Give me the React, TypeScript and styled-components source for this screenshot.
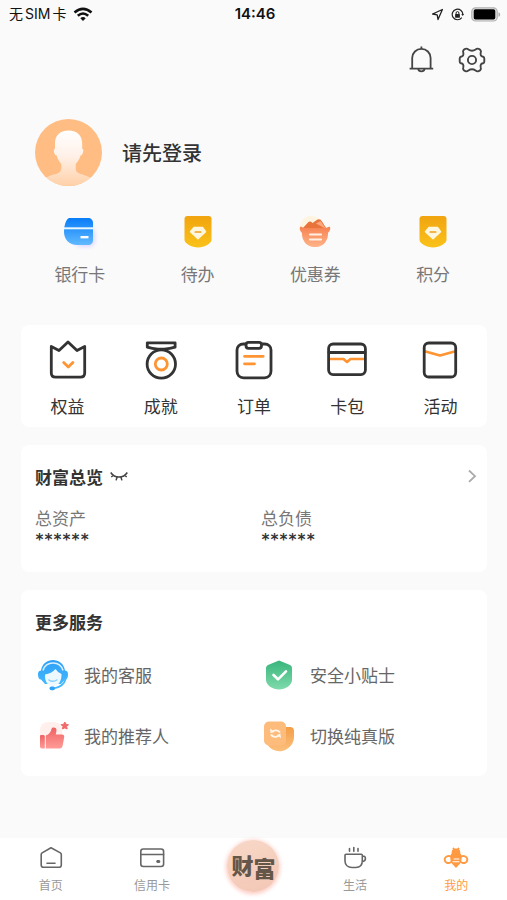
import React from 'react';
import styled, { createGlobalStyle, css } from 'styled-components';

const GlobalStyle = createGlobalStyle`
  *, *::before, *::after { box-sizing: border-box; }
  body {
    margin: 0;
    background: #fafafa;
    color: #333;
    font-family: "Noto Sans CJK SC", "Noto Sans", sans-serif;
  }
  button { font: inherit; color: inherit; background: none; border: 0; padding: 0; cursor: pointer; }
  a { color: inherit; text-decoration: none; }
  svg { display: block; flex: none; }
  h1, h2, p, dl, dd, ul { margin: 0; padding: 0; }
  ul { list-style: none; }
`;

const Screen = styled.div`
  min-height: 100vh;
  display: flex;
  flex-direction: column;
`;

const StatusBar = styled.div`
  display: grid;
  grid-template-columns: 1fr auto 1fr;
  align-items: center;
  height: 28px;
  padding: 0 6px 0 9px;
  color: #111;
  font-family: Inter, "Noto Sans CJK SC", sans-serif;
  font-size: 14px;
  line-height: 20px;
`;

const StatusGroup = styled.div<{ $end?: boolean }>`
  display: flex;
  align-items: center;
  gap: 7px;
  justify-content: ${(p) => (p.$end ? 'flex-end' : 'flex-start')};
`;

const Carrier = styled.span`
  display: flex;
  gap: 2px;
`;

const Time = styled.time`
  font-size: 15px;
  font-weight: 600;
`;

const Toolbar = styled.header`
  display: flex;
  justify-content: flex-end;
  gap: 19px;
  padding: 16px 19px 0;
`;

const Profile = styled.section`
  display: flex;
  align-items: center;
  gap: 20px;
  padding: 43px 35px 0;
`;

const LoginButton = styled.button`
  font-size: 20px;
  line-height: 28px;
  font-weight: 500;
`;

const QuickRow = styled.nav`
  display: grid;
  grid-template-columns: repeat(4, 1fr);
  padding: 28px 15px 0 21px;
  color: #777;
`;

const IconItem = styled.button<{ $gap: number }>`
  display: flex;
  flex-direction: column;
  align-items: center;
  gap: ${(p) => p.$gap}px;
  font-size: 17px;
  line-height: 24px;
`;

const Main = styled.main`
  display: flex;
  flex-direction: column;
  gap: 18px;
  margin-top: 39px;
  padding: 0 20px 0 21px;
`;

const cardSurface = css`
  background: #fff;
  border-radius: 8px;
`;

const FeatureCard = styled.nav`
  ${cardSurface}
  display: grid;
  grid-template-columns: repeat(5, 1fr);
  padding: 13px 0 9px;
`;

const Card = styled.section`
  ${cardSurface}
  padding: 19px 0 22px 14px;
`;

const CardHead = styled.div`
  display: flex;
  align-items: center;
  gap: 7px;
  padding-right: 9px;
`;

const CardTitle = styled.h2`
  font-size: 17px;
  line-height: 26px;
  font-weight: 700;
`;

const MoreButton = styled.button`
  margin-left: auto;
`;

const Totals = styled.dl`
  display: grid;
  grid-template-columns: 1fr 1fr;
  margin-top: 16px;
`;

const TotalLabel = styled.dt`
  font-size: 17px;
  line-height: 24px;
  color: #777;
`;

const TotalValue = styled.dd`
  font-family: "DejaVu Sans Mono", monospace;
  font-size: 15px;
  line-height: 20px;
  font-weight: 700;
`;

const ServiceList = styled.ul`
  display: grid;
  grid-template-columns: 1fr 1fr;
  row-gap: 25px;
  margin-top: 22px;
`;

const ServiceButton = styled.button`
  display: flex;
  align-items: center;
  gap: 13px;
  font-size: 17px;
  line-height: 24px;
  color: #666;
`;

const TabBar = styled.nav`
  display: grid;
  grid-template-columns: repeat(5, 1fr);
  margin-top: auto;
  height: 62px;
  background: #fff;
`;

const Tab = styled.a<{ $active?: boolean }>`
  display: flex;
  flex-direction: column;
  align-items: center;
  gap: 4px;
  padding-top: 6px;
  font-size: 12px;
  line-height: 18px;
  color: ${(p) => (p.$active ? '#ff9a42' : '#999')};
`;

const WealthTab = styled.a`
  display: flex;
  align-items: center;
  justify-content: center;
  width: 52px;
  height: 52px;
  margin-top: 2px;
  justify-self: center;
  border-radius: 50%;
  background: linear-gradient(160deg, #f8d8c8, #f3c6b4);
  box-shadow: 0 1px 4px 1px #ffc9c0;
  color: #65564a;
  font-size: 22px;
  line-height: 24px;
  font-weight: 900;
`;

const WealthChar = styled.span<{ $low?: boolean }>`
  padding-top: ${(p) => (p.$low ? 2 : 0)}px;
  padding-bottom: ${(p) => (p.$low ? 0 : 4)}px;
`;

const WifiIcon = () => (
  <svg width="20" height="15" viewBox="0 0 20 15" fill="none" stroke="#111" strokeWidth="2.6" aria-hidden="true">
    <path d="M1.5 5.5Q10-1.7 18.5 5.5M4.8 8.8Q10 4.2 15.2 8.8" />
    <path d="M7.3 11.2Q10 9 12.7 11.2L10 14Z" fill="#111" stroke="none" />
  </svg>
);

const LocationIcon = () => (
  <svg width="13" height="13" viewBox="0 0 13 13" fill="none" stroke="#222" strokeWidth="1.3" strokeLinejoin="round" aria-hidden="true">
    <path d="M11.4 1.5 1.6 6l4.6.9.8 4.6Z" />
  </svg>
);

const LockIcon = () => (
  <svg width="13" height="13" viewBox="0 0 13 13" fill="none" stroke="#222" aria-hidden="true">
    <path d="M10.8 9.6A5.3 5.3 0 1 1 11.8 7" strokeWidth="1.2" />
    <path d="m10.2 6.3 1.6 1.8 1.2-2Z" fill="#222" stroke="none" />
    <rect x="4.1" y="6" width="4.8" height="3.7" rx=".5" fill="#222" stroke="none" />
    <path d="M5.1 6V5a1.4 1.4 0 0 1 2.8 0v1" />
  </svg>
);

const BatteryIcon = () => (
  <svg width="30" height="15" viewBox="0 0 30 15" aria-hidden="true">
    <rect x=".8" y=".8" width="25.4" height="13.2" rx="3.8" fill="#e5e5e5" stroke="#b0b0b0" strokeWidth="1.2" />
    <rect x="2.7" y="2.2" width="21.6" height="10.4" rx="1.8" fill="#000" />
    <path d="M27.5 5.2c2.2.8 2.2 3.8 0 4.6Z" fill="#aaa" />
  </svg>
);

const BellIcon = () => (
  <svg width="32" height="32" viewBox="0 0 32 32" fill="none" stroke="#444" strokeWidth="1.8" aria-hidden="true">
    <path d="M7.2 24.5V14a9.2 9.2 0 0 1 18.4 0v10.5M4.6 24.6h23.6M16.4 2.6v2" />
    <path d="M13.2 25c.6 3.1 5.8 3.1 6.4 0" />
  </svg>
);

const GearIcon = () => (
  <svg width="32" height="32" viewBox="0 0 32 32" fill="none" stroke="#444" strokeWidth="1.9" strokeLinejoin="round" aria-hidden="true">
    <path d="M9.4 4.8Q11 4.3 12.4 5.5Q16 8 19.6 5.5Q21 4.3 22.6 4.8L24.3 5.9Q25.400 7 24.700 8.800Q24 12.200 27 12.700Q28.300 13.200 28.300 14.600V17.400Q28.300 18.800 27 19.300Q24 19.800 24.700 23.200Q25.400 25 24.300 26.100L22.600 27.200Q21 27.700 19.600 26.500Q16 24 12.400 26.500Q11 27.700 9.400 27.200L7.700 26.100Q6.600 25 7.300 23.200Q8 19.800 5 19.300Q3.700 18.800 3.700 17.400V14.600Q3.700 13.200 5 12.700Q8 12.200 7.300 8.800Q6.600 7 7.700 5.900Z" />
    <circle cx="16" cy="16" r="4.100" />
  </svg>
);

const Avatar = () => (
  <svg width="67" height="67" viewBox="0 0 67 67" role="img" aria-label="头像">
    <defs>
      <linearGradient id="person" x1="0" y1="0" x2="0" y2="1">
        <stop offset="0" stopColor="#fff" />
        <stop offset=".45" stopColor="#fff1e8" />
        <stop offset="1" stopColor="#ffcfa5" />
      </linearGradient>
      <clipPath id="disc"><circle cx="33.5" cy="33.5" r="33.5" /></clipPath>
    </defs>
    <circle cx="33.5" cy="33.5" r="33.5" fill="#ffbd83" />
    <path
      clipPath="url(#disc)"
      fill="url(#person)"
      d="M33.500 11.500c9 0 13.700 5.400 13.700 13v5.300c1.600.5 1.300 3.400.2 5.100-.6 1-1.100 1.600-1.900 1.700-1 4-2.700 6.100-4.800 8.300v4.600c0 4.800 5 5.500 9 6.700 3.800 1.200 6 2.500 9 5.300V68h-51v-6c3-3 5.400-4.800 9.400-6 4.200-1.200 9.200-1.800 9.200-6.500v-4.600c-2.400-2.400-3.800-5-4.600-8.300-.8-.1-1.500-.8-2-1.700-1-1.700-1.300-4.600.3-5.100v-5.300c0-7.600 4.500-13 13.500-13Z"
    />
  </svg>
);

const BankCardIcon = () => (
  <svg width="36" height="36" viewBox="0 0 36 36" aria-hidden="true">
    <defs>
      <linearGradient id="bank" x1="0" y1="0" x2="0" y2="1">
        <stop offset="0" stopColor="#087cf8" /><stop offset="1" stopColor="#61baff" />
      </linearGradient>
      <filter id="bankGlow" x="-50%" y="-50%" width="200%" height="200%"><feGaussianBlur stdDeviation="2" /></filter>
    </defs>
    <rect x="13" y="13" width="20" height="20" rx="7" fill="#dcd8ff" filter="url(#bankGlow)" />
    <path d="M7 4h19c3 0 5 2 5 5v17c0 3-2 5-5 5H15C7 31 2 25 2 18 2 11 4 5.500 7 4Z" fill="url(#bank)" />
    <path d="M2 14.300h29" stroke="#e9f7ff" strokeWidth="2" />
    <path d="M18.500 23.200h8" stroke="#fff" strokeWidth="2.400" />
  </svg>
);

const GemIcon = () => (
  <svg width="36" height="36" viewBox="0 0 36 36" aria-hidden="true">
    <defs>
      <linearGradient id="gem" x1="0" y1="0" x2="0" y2="1">
        <stop offset="0" stopColor="#f1a40f" /><stop offset="1" stopColor="#fac21b" />
      </linearGradient>
    </defs>
    <path d="M7.500 2h21c2 0 3 1 3 3v21c0 3-7 7.500-13.500 7.500S4.500 29 4.500 26V5c0-2 1-3 3-3Z" fill="url(#gem)" />
    <path d="M14 13.500h8.500l3 4.200-7.500 7-7.500-7Z" fill="#fff6df" stroke="#fff6df" strokeWidth="1.500" strokeLinejoin="round" />
    <path d="M15.300 18h5.400" stroke="#eda11a" strokeWidth="1.700" strokeLinecap="round" />
  </svg>
);

const CouponIcon = () => (
  <svg width="36" height="36" viewBox="0 0 36 36" aria-hidden="true">
    <defs>
      <linearGradient id="coupon" x1="0" y1="0" x2="0" y2="1">
        <stop offset="0" stopColor="#f78150" /><stop offset="1" stopColor="#ffb489" />
      </linearGradient>
    </defs>
    <circle cx="14" cy="13" r="11" fill="#fff4df" />
    <path d="M5 15 11 8.500q2-2 4.500.5l5-3.500q3-1 4.500 2l5 8Z" fill="#e8743c" />
    <path d="m19 9.500 4.500-2.500 5.500 8Z" fill="#ffa77c" />
    <path d="M3.500 12.500q3 1.500 6 1.500h17q3 0 6-1.500c1.500 1.500.8 4.500-1.500 6.500 0 3-.5 6-2 8-4 8-18 8-22 0-1.500-2-2-5-2-8-2.300-2-3-5-1.500-6.500Z" fill="url(#coupon)" />
    <path d="M13 20.500h11M13 25.500h11" stroke="#fff0e6" strokeWidth="2.200" strokeLinecap="round" />
  </svg>
);

const lineIcon = { width: 44, height: 44, viewBox: '0 0 44 44', fill: 'none', stroke: '#333', strokeWidth: 2.8, strokeLinejoin: 'round', strokeLinecap: 'round', 'aria-hidden': true } as const;
const ORANGE = '#ff9433';

const CrownIcon = () => (
  <svg {...lineIcon}>
    <path d="M5.300 8.500 13 12.500 22 4l9 8.500 7.700-4V35c0 2.800-1.700 4.200-4.200 4.200h-25c-2.500 0-4.200-1.400-4.200-4.200Z" />
    <path d="m17.700 24.500 4.600 4.600 4.600-4.600" stroke={ORANGE} />
  </svg>
);

const MedalIcon = () => (
  <svg {...lineIcon}>
    <path d="M8.300 4.800h27.800v4.400q-5 1.600-11 1.900h-6q-6-.3-10.800-1.900Z" />
    <circle cx="22.300" cy="26" r="14.200" />
    <circle cx="22.300" cy="26" r="6" stroke={ORANGE} />
  </svg>
);

const OrderIcon = () => (
  <svg {...lineIcon}>
    <path d="M14 6h-2.500C7.500 6 5 8.500 5 12v21c0 4 2.500 6.800 6.500 6.800h21c4 0 6.500-2.800 6.500-6.800V12c0-3.500-2.500-6-6.500-6H30" />
    <rect x="14" y="4.300" width="15.500" height="6" rx="2.500" />
    <path d="M12.500 18.300h18.700M12.500 25.800h10" stroke={ORANGE} />
  </svg>
);

const WalletIcon = () => (
  <svg {...lineIcon}>
    <path d="M4.500 21h14l3.500 3 3.500-3h14" stroke={ORANGE} strokeWidth="2.600" />
    <rect x="3.600" y="6" width="36.800" height="30.600" rx="4.500" />
    <path d="M4 14.500h36" />
  </svg>
);

const EventIcon = () => (
  <svg {...lineIcon}>
    <path d="m7.500 13.500 14.500 4 14.500-4" stroke={ORANGE} strokeWidth="2.600" />
    <rect x="6.200" y="5" width="31.500" height="34" rx="4.500" />
  </svg>
);

const ClosedEyeIcon = () => (
  <svg width="18" height="12" viewBox="0 0 18 12" fill="none" stroke="#444" strokeWidth="1.500" aria-hidden="true">
    <path d="M.7 1.500c4 6 12.600 6 16.600 0M3.300 4.300 1.300 6M7 6.200l-.9 3.200M11 6.200l.9 3.200M14.700 4.300l2 1.700" />
  </svg>
);

const ChevronIcon = () => (
  <svg width="12" height="16" viewBox="0 0 12 16" fill="none" stroke="#aaa" strokeWidth="1.800" aria-hidden="true">
    <path d="m3 1.500 6 5.700-6 5.700" />
  </svg>
);

const SupportIcon = () => (
  <svg width="36" height="36" viewBox="0 0 36 36" aria-hidden="true">
    <defs>
      <linearGradient id="support" x1="0" y1="0" x2="0" y2="1">
        <stop offset="0" stopColor="#2f9ff5" /><stop offset="1" stopColor="#43b8ff" />
      </linearGradient>
    </defs>
    <path d="M6 13.500C8-.5 28-.5 30 13.500c2.500.5 3 1.500 3 4 0 3-1 5-3 5L26 27H10l-4-4.500c-2 0-3-2-3-5 0-2.500.5-3.500 3-4Z" fill="url(#support)" />
    <path d="M8 13.500C11 3.500 25 3.500 28 13.500" fill="none" stroke="#d9f0ff" strokeWidth="1.600" />
    <path d="M10 17.500q6.500-1 10.500-5.500 2.500 4 6 5c.3 7-3 12-8.500 12s-8.500-5-8-11.500Z" fill="#eef9ff" />
    <path d="M14 23q3.800 2.700 7.800 0" fill="none" stroke="#80ccff" strokeWidth="1.500" strokeLinecap="round" />
    <path d="M31 21c-1.500 6-5.500 9.500-12.500 10.500" fill="none" stroke="#48b5ff" strokeWidth="1.700" />
    <rect x="14.500" y="29.500" width="5.500" height="3.800" rx="1.800" fill="#2fa4f7" />
  </svg>
);

const ShieldIcon = () => (
  <svg width="36" height="36" viewBox="0 0 36 36" aria-hidden="true">
    <defs>
      <linearGradient id="shield" x1="0" y1="0" x2="0" y2="1">
        <stop offset="0" stopColor="#38b57b" /><stop offset="1" stopColor="#7fdbab" />
      </linearGradient>
    </defs>
    <path d="M18 3.500 29 8q2 .8 2 3v12c0 5-6.500 9.500-13 9.500S5 28 5 23V11q0-2.200 2-3Z" fill="url(#shield)" />
    <path d="m12.500 18 4.500 4.300 8-8" fill="none" stroke="#fff" strokeWidth="2.600" strokeLinecap="round" strokeLinejoin="round" />
  </svg>
);

const ThumbIcon = () => (
  <svg width="36" height="36" viewBox="0 0 36 36" aria-hidden="true">
    <defs>
      <linearGradient id="thumb" x1="0" y1="0" x2="0" y2="1">
        <stop offset="0" stopColor="#ee6262" /><stop offset="1" stopColor="#ff9c98" />
      </linearGradient>
    </defs>
    <rect x="5" y="4" width="22" height="23" rx="8" fill="#fff0ee" />
    <path d="M6 17h2.500q1.300 0 1.300 1.500v12H7q-2 0-2-2V18q0-1 1-1Z" fill="url(#thumb)" />
    <path d="M10.800 17.500c3.500-1 5.200-4 5.700-6.500.5-2.200 5-2 5 1 0 1.500-.5 3-.7 4.500H27q2.500.2 2.200 2.500l-1.500 8.500q-.6 3-3 3H10.800Z" fill="url(#thumb)" />
    <path d="m29.800 4 1.200 2.300 2.500.4-1.800 1.800.5 2.500-2.400-1.100-2.300 1.100.4-2.500-1.800-1.800 2.500-.4Z" fill="#f06c6c" stroke="#f06c6c" strokeLinejoin="round" />
  </svg>
);

const SwitchIcon = () => (
  <svg width="36" height="36" viewBox="0 0 36 36" aria-hidden="true">
    <defs>
      <linearGradient id="switchBack" x1="0" y1="0" x2="0" y2="1">
        <stop offset="0" stopColor="#f49e45" /><stop offset="1" stopColor="#fbc07e" />
      </linearGradient>
    </defs>
    <path d="M24 9h5q4 0 4 4v5.500a14.500 14.500 0 0 1-28 5.500Z" fill="url(#switchBack)" />
    <rect x="3" y="3.500" width="22" height="24" rx="5" fill="#fdbb7c" />
    <path d="M19 14.500c-1.500-2.500-6-3-7.500-.5M10 16.500c1.500 3 6 3.200 7.800.8" fill="none" stroke="#fff5e8" strokeWidth="1.900" />
    <path d="m9 10.500.5 4.800 4-1.500ZM20 20.300l-.6-4.800-3.900 1.700Z" fill="#fff5e8" />
  </svg>
);

const tabIcon = { width: 28, height: 28, viewBox: '0 0 28 28', fill: 'none', stroke: '#666', strokeWidth: 1.6, strokeLinejoin: 'round', strokeLinecap: 'round', 'aria-hidden': true } as const;

const HomeIcon = () => (
  <svg {...tabIcon}>
    <path d="M4.200 10.500q0-1 .9-1.600L14 3.700l9.400 5.200q.9.600.9 1.600V21q0 2.300-2.300 2.300H6.500q-2.300 0-2.300-2.300ZM10 19.300h8" />
  </svg>
);

const CreditIcon = () => (
  <svg {...tabIcon}>
    <rect x="2.800" y="5" width="22.800" height="17.500" rx="2.500" />
    <path d="M2.800 10.500h22.800" />
    <rect x="18.800" y="16.500" width="3" height="2" rx=".5" fill="#666" strokeWidth="1" />
  </svg>
);

const CupIcon = () => (
  <svg {...tabIcon}>
    <path d="M5 10.300h15.300q1 0 1 1V17c0 4-2.500 6.500-6.500 6.500H11c-4 0-7-2.500-7-6.500v-5.700q0-1 1-1ZM21.500 12c4-.5 4 5.500-.4 5.700M8.500 4.500v2.700M12.800 3.500v3.700M17 4.500v2.700" />
  </svg>
);

const BeeIcon = () => (
  <svg {...tabIcon} stroke="#ff9a42">
    <ellipse cx="6.600" cy="15.500" rx="3.900" ry="3.500" strokeWidth="2" transform="rotate(-15 6.600 15.500)" />
    <ellipse cx="21.400" cy="15.500" rx="3.900" ry="3.500" strokeWidth="2" transform="rotate(15 21.400 15.500)" />
    <path d="m11.300 4.300 1 1.500M16.700 4.300l-1 1.500" />
    <path d="M14 4.500c3.500 0 4.500 2 4.200 4.800 2 1.500 2 8.700-.5 10.700L14 24l-3.700-4c-2.500-2-2.500-9.200-.5-10.700-.3-2.800.7-4.800 4.200-4.800Z" fill="#ff9a42" stroke="none" />
    <path d="M12 15h5M11 17.800h6" stroke="#fff" strokeWidth="1.100" />
  </svg>
);

type Item = { label: string; Icon: React.FC };

const quickItems: Item[] = [
  { label: '银行卡', Icon: BankCardIcon },
  { label: '待办', Icon: GemIcon },
  { label: '优惠券', Icon: CouponIcon },
  { label: '积分', Icon: GemIcon },
];

const features: Item[] = [
  { label: '权益', Icon: CrownIcon },
  { label: '成就', Icon: MedalIcon },
  { label: '订单', Icon: OrderIcon },
  { label: '卡包', Icon: WalletIcon },
  { label: '活动', Icon: EventIcon },
];

const services: Item[] = [
  { label: '我的客服', Icon: SupportIcon },
  { label: '安全小贴士', Icon: ShieldIcon },
  { label: '我的推荐人', Icon: ThumbIcon },
  { label: '切换纯真版', Icon: SwitchIcon },
];

export default function App() {
  return (
    <Screen>
      <GlobalStyle />
      <StatusBar>
        <StatusGroup>
          <Carrier><span>无</span><span>SIM</span><span>卡</span></Carrier>
          <WifiIcon />
        </StatusGroup>
        <Time>14:46</Time>
        <StatusGroup $end>
          <LocationIcon />
          <LockIcon />
          <BatteryIcon />
        </StatusGroup>
      </StatusBar>

      <Toolbar>
        <button type="button" aria-label="消息"><BellIcon /></button>
        <button type="button" aria-label="设置"><GearIcon /></button>
      </Toolbar>

      <Profile>
        <Avatar />
        <LoginButton type="button">请先登录</LoginButton>
      </Profile>

      <QuickRow>
        {quickItems.map(({ label, Icon }) => (
          <IconItem key={label} type="button" $gap={12}><Icon />{label}</IconItem>
        ))}
      </QuickRow>

      <Main>
        <FeatureCard>
          {features.map(({ label, Icon }) => (
            <IconItem key={label} type="button" $gap={12}><Icon />{label}</IconItem>
          ))}
        </FeatureCard>

        <Card>
          <CardHead>
            <CardTitle>财富总览</CardTitle>
            <button type="button" aria-label="显示金额"><ClosedEyeIcon /></button>
            <MoreButton type="button" aria-label="查看财富详情"><ChevronIcon /></MoreButton>
          </CardHead>
          <Totals>
            <div><TotalLabel>总资产</TotalLabel><TotalValue>******</TotalValue></div>
            <div><TotalLabel>总负债</TotalLabel><TotalValue>******</TotalValue></div>
          </Totals>
        </Card>

        <Card>
          <CardTitle>更多服务</CardTitle>
          <ServiceList>
            {services.map(({ label, Icon }) => (
              <li key={label}><ServiceButton type="button"><Icon />{label}</ServiceButton></li>
            ))}
          </ServiceList>
        </Card>
      </Main>

      <TabBar>
        <Tab href="#home"><HomeIcon />首页</Tab>
        <Tab href="#credit"><CreditIcon />信用卡</Tab>
        <WealthTab href="#wealth"><WealthChar>财</WealthChar><WealthChar $low>富</WealthChar></WealthTab>
        <Tab href="#life"><CupIcon />生活</Tab>
        <Tab href="#mine" $active aria-current="page"><BeeIcon />我的</Tab>
      </TabBar>
    </Screen>
  );
}
